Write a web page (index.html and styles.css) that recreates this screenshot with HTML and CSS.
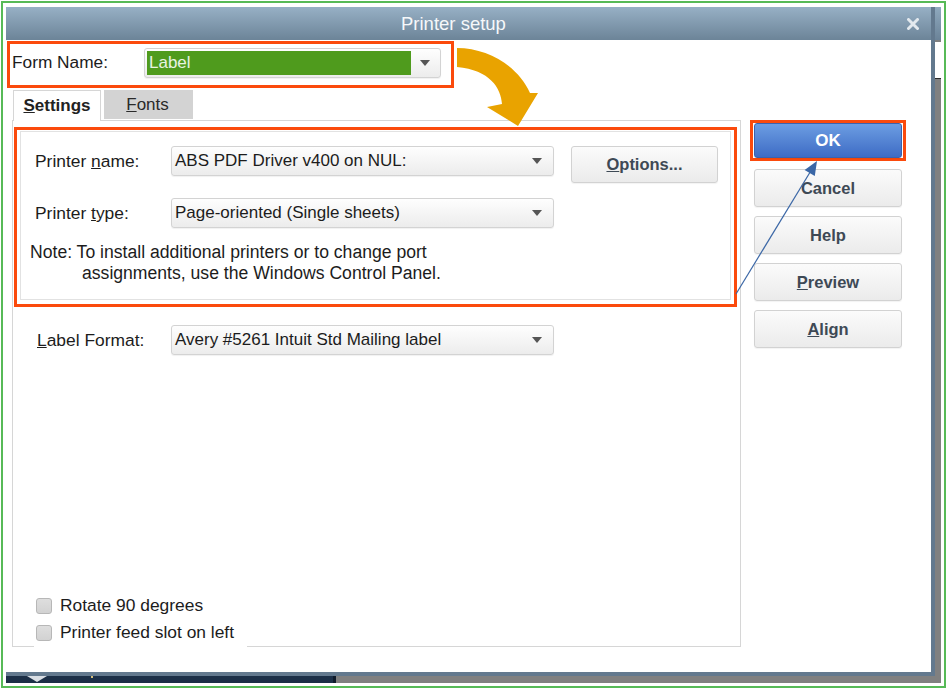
FILE: index.html
```html
<!DOCTYPE html>
<html>
<head>
<meta charset="utf-8">
<title>Printer setup</title>
<link rel="stylesheet" href="styles.css">
</head>
<body>
<div class="frame">
  <div class="green">
    <div class="desktop">
      <div class="dialog">
        <div class="titlebar">
          <span class="title">Printer setup</span>
          <svg class="close" width="12" height="12" viewBox="0 0 12 12"><path d="M1.5 1.5 L10.5 10.5 M10.5 1.5 L1.5 10.5" stroke="#e3e9ee" stroke-width="3" stroke-linecap="round"/></svg>
        </div>
        <div class="dlg-body">
          <div class="main">
            <div class="formname hl">
              <span class="fn-lbl">Form Name:</span>
              <div class="combo fn-combo">
                <span class="fn-sel">Label</span>
                <span class="caret-zone"><span class="caret"></span></span>
              </div>
            </div>
            <div class="tabs">
              <div class="tab active"><span><u>S</u>ettings</span></div>
              <div class="tab-wrap"><div class="tab inactive"><span><u>F</u>onts</span></div></div>
              <div class="tab-fill"></div>
            </div>
            <div class="panel">
              <div class="printer-box hl">
                <div class="group">
                  <div class="row">
                    <span class="lbl lbl-w">Printer <u>n</u>ame:</span>
                    <div class="combo wide"><span class="ctext">ABS PDF Driver v400 on NUL:</span><span class="caret"></span></div>
                    <button class="btn opt"><u>O</u>ptions...</button>
                  </div>
                  <div class="row row2">
                    <span class="lbl lbl-w">Printer <u>t</u>ype:</span>
                    <div class="combo wide"><span class="ctext">Page-oriented (Single sheets)</span><span class="caret"></span></div>
                  </div>
                  <div class="note">
                    <div>Note: To install additional printers or to change port</div>
                    <div class="note2">assignments, use the Windows Control Panel.</div>
                  </div>
                </div>
              </div>
              <div class="row labelfmt">
                <span class="lbl lbl-w2"><u>L</u>abel Format:</span>
                <div class="combo wide"><span class="ctext">Avery #5261 Intuit Std Mailing label</span><span class="caret"></span></div>
              </div>
              <div class="checks">
                <label class="chk"><span class="box"></span><span>Rotate 90 degrees</span></label>
                <label class="chk"><span class="box"></span><span>Printer feed slot on left</span></label>
              </div>
            </div>
          </div>
          <div class="side">
            <div class="ok-hl hl">
              <button class="btn ok">OK</button>
            </div>
            <button class="btn sbtn first">Cancel</button>
            <button class="btn sbtn">Help</button>
            <button class="btn sbtn"><u>P</u>review</button>
            <button class="btn sbtn"><u>A</u>lign</button>
          </div>
        </div>
      </div>
      <div class="rstrip"></div>
      <div class="bstrip">
        <div class="navy"><span class="tri"></span><span class="dot"></span></div>
        <div class="navy2"></div>
      </div>
    </div>
  </div>
  <svg class="annot" width="948" height="690" viewBox="0 0 948 690">
    <path d="M457,48 C488,48 518,66 530,93 L538,93 L518,126 L487,107 L502,104 C501,88 490,70 457,67 Z" fill="#e9a300"/>
    <line x1="736" y1="294" x2="812" y2="169" stroke="#3b67a6" stroke-width="1.2"/>
    <polygon points="817,161 804.6,170 814.8,176" fill="#3b67a6"/>
  </svg>
</div>
</body>
</html>
```
FILE: styles.css
```css
* { box-sizing: border-box; }
html, body { margin: 0; padding: 0; background: #fff; }
body { font-family: "Liberation Sans", Arial, sans-serif; color: #1c1c1c; font-size: 17px; }

.frame { position: relative; width: 948px; height: 690px; padding: 1px 2px 2px 1px; }
.green { width: 945px; height: 687px; border: 2px solid #57ba57; padding: 4px 3px 3px 3px; }

.desktop {
  width: 935px; height: 676px;
  display: grid;
  grid-template-columns: 929px 6px;
  grid-template-rows: 669px 7px;
  background: #808080;
}

.dialog {
  grid-row: 1; grid-column: 1;
  background: #fff;
  border-right: 4px solid #63798e;
  border-bottom: 4px solid #63798e;
  display: flex; flex-direction: column;
}

.titlebar {
  height: 33px; flex: none;
  background: linear-gradient(#97b0c5, #6c8498);
  display: flex; align-items: center;
}
.title { margin-left: 395px; color: #f6f8fa; font-size: 18.5px; }
.close { margin-left: auto; margin-right: 12px; }

.dlg-body { flex: 1; display: flex; }
.main { width: 744px; display: flex; flex-direction: column; }
.side { width: 181px; padding-top: 80px; display: flex; flex-direction: column; }

.hl { border: 3px solid #fb4a0c; }

.formname {
  margin: 1px 0 0 1px; width: 447px; height: 47px;
  display: flex; align-items: center; padding-left: 2px;
}
.fn-lbl { width: 132px; margin-bottom: 5px; font-size: 17.3px; }

.combo {
  height: 30px;
  border: 1px solid #d3d3d3; border-radius: 3px;
  background: linear-gradient(#fefefe, #ececec);
  box-shadow: 0 1px 1px rgba(0,0,0,0.06);
  display: flex; align-items: center;
}
.fn-combo { width: 297px; padding: 2px; margin-bottom: 3px; }
.fn-sel {
  width: 264px; height: 24px; background: #4f9b1d; color: #e9f3e2;
  display: flex; align-items: center; padding-left: 2px;
}
.caret-zone { flex: 1; display: flex; justify-content: center; align-items: center; }
.caret {
  width: 0; height: 0;
  border-left: 5px solid transparent; border-right: 5px solid transparent;
  border-top: 6px solid #555;
}
.wide { width: 383px; padding: 0 11px 0 3px; }
.ctext { flex: 1; color: #1c1c1c; }

.tabs { display: flex; align-items: flex-end; height: 33px; margin-left: 6px; width: 729px; padding-left: 1px;
  background: linear-gradient(#d6d6d6,#d6d6d6) 0 32px / 1px 1px no-repeat; }
.tab { font-size: 17px; display: flex; align-items: center; justify-content: center; }
.tab.active {
  width: 88px; height: 31px; font-weight: bold;
  border: 1px solid #d6d6d6; border-bottom: 0; background: #fff; color: #222;
  padding-bottom: 1px;
}
.tab-wrap { padding: 0 0 1px 3px; border-bottom: 1px solid #d6d6d6; }
.tab.inactive { width: 89px; height: 29px; background: #d3d3d3; color: #2a2a2a; padding-right: 2px; }
.tab-fill { flex: 1; height: 33px; border-bottom: 1px solid #d6d6d6; }

.panel {
  margin-left: 6px; width: 729px; height: 526px;
  border-left: 1px solid #d6d6d6; border-right: 1px solid #d6d6d6;
  background:
    linear-gradient(#d6d6d6, #d6d6d6) left bottom / 21px 1px no-repeat,
    linear-gradient(#d6d6d6, #d6d6d6) right bottom / 493px 1px no-repeat;
  display: flex; flex-direction: column;
  padding-bottom: 1px;
}

.printer-box { margin: 6px 3px 0 1px; }
.group { margin: 1px 3px 4px 3px; border: 1px solid #e2e2e2; padding: 14px 0 15px 14px; }
.row { display: flex; align-items: flex-start; }
.lbl { display: block; height: 30px; line-height: 30px; white-space: nowrap; font-size: 17.4px; }
.lbl-w { width: 136px; }
.row2 { margin-top: 15px; }

.btn {
  font-family: "Liberation Sans", Arial, sans-serif;
  font-weight: bold; font-size: 16.5px; color: #3e4955;
  border: 1px solid #d2d2d2; border-radius: 3px;
  background: linear-gradient(#fbfbfb, #ebebeb);
  box-shadow: 0 1px 1px rgba(0,0,0,0.05);
  padding: 0;
}
.opt { margin-left: 17px; width: 147px; height: 37px; }

.note { margin: 14px 0 0 -5px; line-height: 21px; font-size: 17.6px; }
.note2 { margin-left: 52px; }

.labelfmt { margin-top: 18px; padding-left: 24px; }
.lbl-w2 { width: 134px; }

.checks { margin-top: auto; padding-left: 23px; font-size: 17.4px; }
.chk { height: 27px; display: flex; align-items: center; }
.box {
  width: 16px; height: 16px; border: 1px solid #b7b7b7; border-radius: 3px;
  background: linear-gradient(#dedede, #d2d2d2); margin-right: 8px;
}

.ok-hl { width: 156px; height: 41px; padding: 0 1px; }
.ok {
  width: 148px; height: 35px; color: #fff; font-size: 17px;
  background: linear-gradient(#6c9de2, #3e6cc5);
  border: 1px solid #3b62ad;
}
.sbtn { margin: 9px 0 0 4px; width: 148px; height: 38px; }
.sbtn.first { margin-top: 8px; }

.rstrip {
  grid-row: 1; grid-column: 2;
  background:
    linear-gradient(#8fa9be, #6b8398) 0 0 / 100% 33px no-repeat,
    linear-gradient(#fff, #fff) 0 35px / 100% 36px no-repeat,
    linear-gradient(#2a2a2a, #2a2a2a) 0 71px / 100% 1px no-repeat,
    #808080;
}
.bstrip { grid-row: 2; grid-column: 1 / 3; display: flex; }
.navy { width: 327px; background: #1c2f47; display: flex; align-items: flex-start; }
.navy2 { width: 3px; background: #0f1b2b; }
.tri {
  margin-left: 21px; width: 0; height: 0;
  border-left: 10px solid transparent; border-right: 10px solid transparent;
  border-top: 6px solid #d9dee4;
}
.dot { margin-left: 44px; width: 2px; height: 2px; background: #d8c07a; }

.annot { position: absolute; left: 0; top: 0; pointer-events: none; }
```
